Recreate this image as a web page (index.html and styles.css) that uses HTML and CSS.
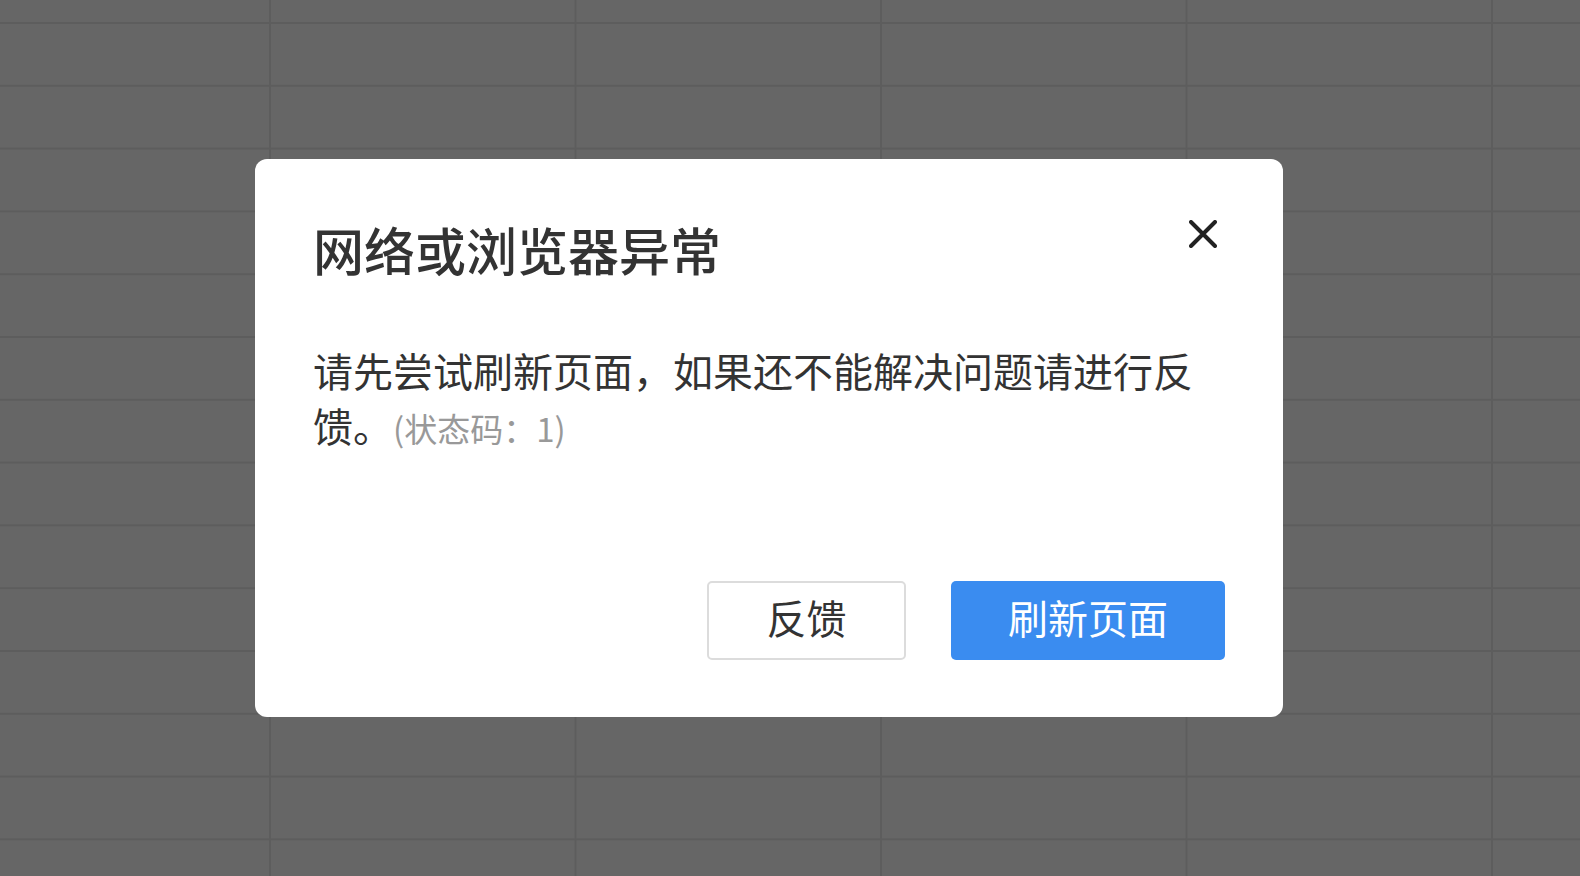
FILE: index.html
```html
<!DOCTYPE html>
<html lang="zh-CN">
<head>
    <meta charset="utf-8">
    <title>网络或浏览器异常</title>
    <link rel="stylesheet" href="styles.css">
</head>
<body>
    <div class="sheet"></div>

    <div class="mask">
        <div class="dialog">
            <div class="dialog-header">
                <h2 class="dialog-title">网络或浏览器异常</h2>
                <button class="dialog-close" type="button" aria-label="关闭">
                    <svg width="28" height="28" viewBox="0 0 28 28">
                        <path d="M2 2 L26 26 M26 2 L2 26" stroke="#222" stroke-width="4" stroke-linecap="round" fill="none"/>
                    </svg>
                </button>
            </div>
            <div class="dialog-body">
                请先尝试刷新页面，如果还不能解决问题请进行反馈。<span class="status-code">(状态码：1)</span>
            </div>
            <div class="dialog-footer">
                <button class="btn btn-default" type="button">反馈</button>
                <button class="btn btn-primary" type="button">刷新页面</button>
            </div>
        </div>
    </div>
</body>
</html>
```

FILE: styles.css
```css
html, body {
    margin: 0;
    height: 100%;
    overflow: hidden;
}

body {
    font-family: "Noto Sans CJK SC", "Noto Sans", sans-serif;
    background-color: #666666;
}

/* spreadsheet grid seen through the mask */
.sheet {
    height: 100%;
    background-image:
        linear-gradient(to right, #5d5d5d 0, #5d5d5d 2px, transparent 2px),
        linear-gradient(to bottom, #5d5d5d 0, #5d5d5d 2px, transparent 2px);
    background-size: 305.5px 100%, 100% 62.8px;
    background-position: 269px 0, 0 22px;
}

.mask {
    position: fixed;
    top: 0;
    left: 0;
    right: 0;
    bottom: 0;
    display: flex;
    align-items: center;
    justify-content: center;
    padding-right: 42px;
}

.dialog {
    box-sizing: border-box;
    width: 1028px;
    height: 558px;
    background: #fff;
    border-radius: 12px;
    padding: 54px 58px 57px 58px;
    display: flex;
    flex-direction: column;
}

.dialog-header {
    display: flex;
    justify-content: space-between;
    align-items: flex-start;
}

.dialog-title {
    margin: 0;
    font-size: 51px;
    font-weight: 500;
    line-height: 72px;
    color: #333;
}

.dialog-close {
    width: 44px;
    height: 44px;
    margin-top: -1px;
    padding: 0;
    border: none;
    background: none;
    display: flex;
    align-items: center;
    justify-content: center;
}

.dialog-body {
    margin-top: 58px;
    font-size: 40px;
    line-height: 55px;
    color: #333;
}

.status-code {
    font-size: 33px;
    color: #999;
}

.dialog-footer {
    margin-top: auto;
    display: flex;
    justify-content: flex-end;
    gap: 45px;
}

.btn {
    height: 79px;
    font-family: inherit;
    font-size: 40px;
    border-radius: 5px;
    padding: 0 0 7px 0;
}

.btn-default {
    width: 199px;
    background: #fff;
    border: 2px solid #dcdcdc;
    color: #333;
}

.btn-primary {
    width: 274px;
    background: #3a8cf0;
    border: none;
    color: #fff;
}
```
